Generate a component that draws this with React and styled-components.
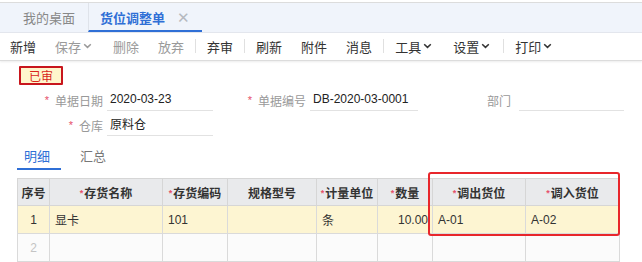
import React from "react";
import styled, { createGlobalStyle } from "styled-components";

const Global = createGlobalStyle`
  html, body { margin: 0; padding: 0; background: #fff; }
  body {
    font-family: "Liberation Sans", "Noto Sans CJK SC", sans-serif;
    color: #333;
    width: 642px;
    height: 262px;
    overflow: hidden;
  }
  * { box-sizing: border-box; }
`;

const Page = styled.div`
  width: 642px;
  height: 262px;
  position: relative;
  display: flex;
  flex-direction: column;
`;

const TabBar = styled.div`
  margin-top: 2px;
  border-top: 1px solid #dcdcdc;
  height: 32px;
  background: #f0f4fb;
  border-bottom: 1px solid #e4e7ee;
  display: flex;
  align-items: stretch;
  padding-left: 10px;
`;

const PageTab = styled.div`
  position: relative;
  display: flex;
  align-items: center;
  gap: 12px;
  padding: ${(p) => (p.$active ? "0 12px 0 11px" : "0 13px")};
  font-size: 13px;
  font-weight: ${(p) => (p.$active ? 700 : 400)};
  color: ${(p) => (p.$active ? "#2f6fd6" : "#888")};
  border-bottom: 2px solid ${(p) => (p.$active ? "#2f6fd6" : "transparent")};
  border-left: ${(p) => (p.$sep ? "1px solid #dfe3ea" : "none")};
  padding-top: 2px;
`;

const Close = styled.span`
  font-size: 15px;
  font-weight: 300;
  color: #b5b9c0;
  line-height: 1;
`;

const Toolbar = styled.div`
  height: 29px;
  display: flex;
  align-items: center;
  padding-left: 0.5px;
  border-bottom: 1px solid #dcdcdc;
  box-shadow: 0 1px 2px rgba(0, 0, 0, 0.08);
`;

const ToolButton = styled.div`
  display: flex;
  align-items: center;
  gap: 2px;
  padding: 0 9.5px;
  font-size: 13px;
  color: ${(p) => (p.$disabled ? "#9a9a9a" : "#333")};
`;

const Chevron = styled.svg`
  width: 9px;
  height: 6px;
  margin-right: 2px;
`;

const Sep = styled.div`
  width: 1px;
  height: 14px;
  background: #e0e0e0;
  margin: 0 1.5px;
`;

const Badge = styled.div`
  margin: 5px 0 0 19px;
  width: 44px;
  height: 19px;
  border: 2px solid #c8161d;
  background: #fff6cc;
  color: #d9261c;
  font-size: 12px;
  display: flex;
  align-items: center;
  justify-content: center;
  border-radius: 1px;
`;

const Form = styled.div`
  margin-top: 2px;
  display: grid;
  grid-template-columns: 107px 106px 97px 108px 97px 109px;
  grid-auto-rows: 25px;
`;

const Label = styled.div`
  display: flex;
  align-items: center;
  justify-content: flex-end;
  padding-right: 4px;
  padding-top: 1px;
  font-size: 12px;
  color: #999;
`;

const Star = styled.span`
  color: #e6506a;
  font-size: ${(p) => (p.$small ? "9px" : "11px")};
  margin-right: ${(p) => (p.$small ? "1px" : "6px")};
  position: relative;
  top: ${(p) => (p.$small ? "-2px" : "0")};
`;

const Field = styled.div`
  display: flex;
  align-items: center;
  padding-left: 3px;
  font-size: 12px;
  color: #222;
  border-bottom: 1px solid #e2e2e2;
  margin-bottom: 1px;
  margin-left: ${(p) => (p.$offset ? `${p.$offset}px` : "0")};
`;

const SubTabs = styled.div`
  margin: 5px 0 0 17px;
  display: flex;
  gap: 12px;
  height: 29px;
`;

const SubTab = styled.div`
  display: flex;
  align-items: center;
  padding: 0 11px 0 7px;
  font-size: 13px;
  color: ${(p) => (p.$active ? "#2f6fd6" : "#777")};
  border-bottom: 2px solid ${(p) => (p.$active ? "#2f6fd6" : "transparent")};
`;

const TableWrap = styled.div`
  margin: 8px 0 0 17px;
  width: 602px;
`;

const Table = styled.table`
  border-collapse: collapse;
  table-layout: fixed;
  width: 602px;
`;

const Th = styled.th`
  height: 27px;
  background: #e9eaec;
  border: 1px solid #d6d6d6;
  font-size: 12px;
  font-weight: 700;
  color: #333;
  text-align: center;
  padding: 0;
  white-space: nowrap;
`;

const Tr = styled.tr`
  background: ${(p) => (p.$hl ? "#fdf5d2" : "#fbfbfb")};
`;

const Td = styled.td`
  height: 28px;
  border: 1px solid #dadada;
  font-size: 12px;
  color: ${(p) => (p.$muted ? "#c4c4c4" : "#333")};
  text-align: ${(p) => p.$align || "left"};
  padding: ${(p) => (p.$align === "right" ? "0 4px 0 0" : p.$align === "center" ? "0" : "0 0 0 5px")};
  white-space: nowrap;
`;

const Highlight = styled.div`
  position: absolute;
  left: 428px;
  top: 172px;
  width: 192px;
  height: 64px;
  border: 2.5px solid #e8262b;
  border-radius: 3px;
  pointer-events: none;
`;

const ChevronIcon = () => (
  <Chevron viewBox="0 0 9 6">
    <path d="M1.2 1.2 L4.5 4.4 L7.8 1.2" fill="none" stroke="currentColor" strokeWidth="1.5" />
  </Chevron>
);

const tools = [
  { t: "新增" },
  { t: "保存", d: true, c: true },
  { t: "删除", d: true },
  { t: "放弃", d: true },
  { sep: true },
  { t: "弃审" },
  { sep: true },
  { t: "刷新" },
  { t: "附件" },
  { t: "消息" },
  { sep: true },
  { t: "工具", c: true },
  { t: "设置", c: true },
  { sep: true },
  { t: "打印", c: true },
];

const cols = [
  { w: 32, t: "序号" },
  { w: 113, t: "存货名称", r: true },
  { w: 65, t: "存货编码", r: true },
  { w: 89, t: "规格型号" },
  { w: 61, t: "计量单位", r: true },
  { w: 55, t: "数量", r: true },
  { w: 93, t: "调出货位", r: true },
  { w: 94, t: "调入货位", r: true },
];

export default function App() {
  return (
    <Page>
      <Global />
      <TabBar>
        <PageTab>我的桌面</PageTab>
        <PageTab $active $sep>
          货位调整单<Close>✕</Close>
        </PageTab>
      </TabBar>
      <Toolbar>
        {tools.map((it, i) =>
          it.sep ? (
            <Sep key={i} />
          ) : (
            <ToolButton key={i} $disabled={it.d}>
              {it.t}
              {it.c && <ChevronIcon />}
            </ToolButton>
          )
        )}
      </Toolbar>
      <Badge>已审</Badge>
      <Form>
        <Label><Star>*</Star>单据日期</Label>
        <Field>2020-03-23</Field>
        <Label><Star>*</Star>单据编号</Label>
        <Field>DB-2020-03-0001</Field>
        <Label>部门</Label>
        <Field $offset={4} />
        <Label><Star>*</Star>仓库</Label>
        <Field>原料仓</Field>
      </Form>
      <SubTabs>
        <SubTab $active>明细</SubTab>
        <SubTab>汇总</SubTab>
      </SubTabs>
      <TableWrap>
        <Table>
          <colgroup>
            {cols.map((c) => (
              <col key={c.t} style={{ width: c.w }} />
            ))}
          </colgroup>
          <thead>
            <tr>
              {cols.map((c) => (
                <Th key={c.t}>
                  {c.r && <Star $small>*</Star>}
                  {c.t}
                </Th>
              ))}
            </tr>
          </thead>
          <tbody>
            <Tr $hl>
              <Td $align="center">1</Td>
              <Td>显卡</Td>
              <Td $pad>101</Td>
              <Td />
              <Td>条</Td>
              <Td $align="right">10.00</Td>
              <Td>A-01</Td>
              <Td>A-02</Td>
            </Tr>
            <Tr>
              <Td $align="center" $muted>2</Td>
              <Td />
              <Td />
              <Td />
              <Td />
              <Td />
              <Td />
              <Td />
            </Tr>
          </tbody>
        </Table>
      </TableWrap>
      <Highlight />
    </Page>
  );
}
